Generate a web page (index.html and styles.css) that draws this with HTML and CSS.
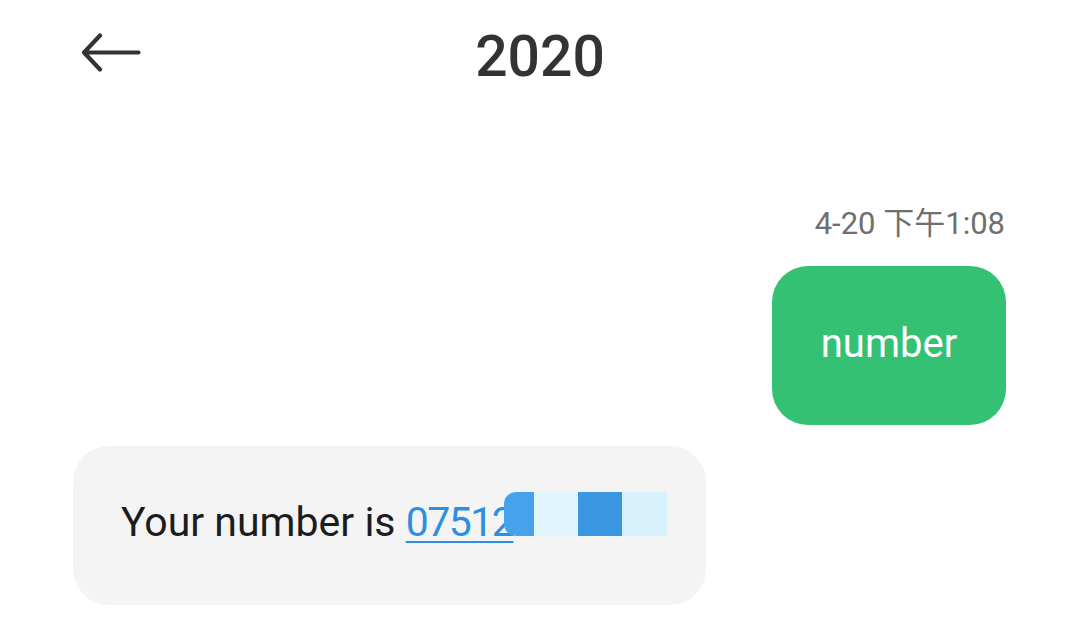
FILE: index.html
```html
<!DOCTYPE html>
<html lang="zh">
<head>
<meta charset="utf-8">
<title>2020</title>
<link rel="stylesheet" href="styles.css">
</head>
<body>
<div class="screen">
  <header class="topbar">
    <div class="back">
      <svg class="back-icon" width="62" height="42" viewBox="0 0 62 42" aria-hidden="true">
        <path d="M58.5 19.5 H4 M20 2.5 L4 19.5 L20 36.5" fill="none" stroke="#333" stroke-width="4.2" stroke-linecap="round" stroke-linejoin="round"/>
      </svg>
    </div>
    <h1 class="title">2020</h1>
    <div class="spacer"></div>
  </header>
  <main class="chat">
    <div class="stamp">4-20 下午1:08</div>
    <div class="bubble bubble-out">number</div>
    <div class="bubble bubble-in">Your number is <a class="link" href="#">07512</a><span class="redact"><i class="r1"></i><i class="r2"></i><i class="r3"></i><i class="r4"></i></span></div>
  </main>
</div>
</body>
</html>
```
FILE: styles.css
```css
* { box-sizing: border-box; }
html, body { margin: 0; padding: 0; background: #ffffff; }
body { font-family: Roboto, "Noto Sans CJK SC", "Noto Sans", sans-serif; }
.screen { width: 1080px; height: 644px; overflow: hidden; }

.topbar {
  display: grid;
  grid-template-columns: 1fr auto 1fr;
  align-items: start;
  height: 120px;
  padding-top: 28px;
}
.back { padding-left: 80px; padding-top: 5px; }
.back-icon { display: block; }
.title {
  margin: 0;
  font-size: 57px;
  line-height: 58px;
  font-weight: 500;
  color: #333333;
}

.chat {
  display: flex;
  flex-direction: column;
  padding: 88px 74px 0 73px;
}
.stamp {
  align-self: flex-end;
  font-size: 31px;
  line-height: 31px;
  color: #6f6f6f;
  margin-right: 1px;
}
.bubble {
  border-radius: 36px;
}
.bubble-out {
  align-self: flex-end;
  margin-top: 27px;
  height: 159px;
  width: 234px;
  padding: 58px 0 0 0;
  text-align: center;
  background: #35c173;
  color: #ffffff;
  font-size: 40px;
  line-height: 40px;
}
.bubble-in {
  align-self: flex-start;
  margin-top: 21px;
  height: 159px;
  padding: 56px 39px 0 48px;
  background: #f4f4f4;
  color: #1c1c1c;
  font-size: 41px;
  line-height: 41px;
  white-space: nowrap;
}
.link {
  color: #2e8fe0;
  text-decoration: underline;
  text-decoration-thickness: 2px;
  text-underline-offset: 5px;
  letter-spacing: -1.5px;
}
.redact {
  display: inline-flex;
  height: 44px;
  margin-top: -14px;
  margin-left: -9px;
  vertical-align: baseline;
}
.redact i { display: block; height: 44px; }
.r1 { width: 30px; background: #47a2ec; border-radius: 12px 0 0 12px; }
.r2 { width: 44px; background: #e1f5fc; }
.r3 { width: 44px; background: #3a96e0; }
.r4 { width: 45px; background: #d6f0fc; }
```
